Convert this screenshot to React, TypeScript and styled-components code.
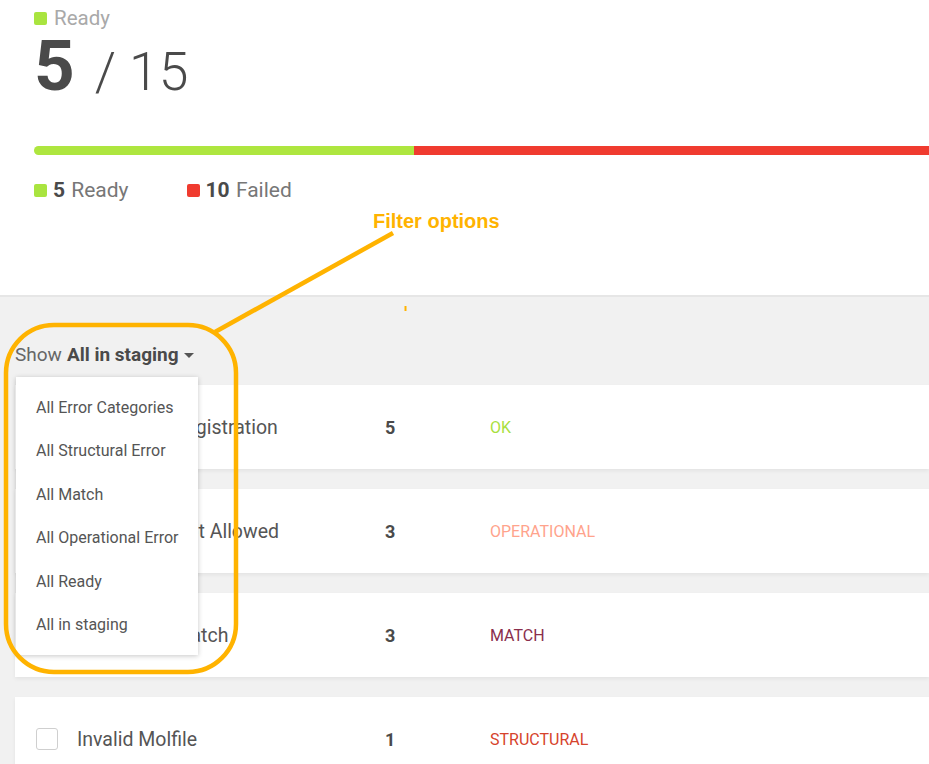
import React from "react";
import styled, { createGlobalStyle } from "styled-components";

const GlobalStyle = createGlobalStyle`
  html, body {
    margin: 0;
    padding: 0;
    background: #ffffff;
    overflow: hidden;
  }
  body {
    font-family: Roboto, "Noto Sans", Arial, sans-serif;
  }
`;

const ORANGE = "#ffb300";

const Page = styled.div`
  position: relative;
  width: 929px;
  height: 764px;
  overflow: hidden;
  display: flex;
  flex-direction: column;
  font-family: Roboto, "Noto Sans", Arial, sans-serif;
  color: #555;
`;

const Header = styled.header`
  padding: 6px 0 0 34px;
`;

const StatusLabel = styled.div`
  display: flex;
  align-items: center;
  gap: 7px;
  font-size: 20.5px;
  line-height: 24px;
  color: #a9a9a9;
`;

const Swatch = styled.span<{ $color: string }>`
  display: inline-block;
  width: 13px;
  height: 13px;
  border-radius: 2px;
  background: ${(p) => p.$color};
  flex: none;
`;

const Count = styled.div`
  margin-top: 1px;
  line-height: 70px;
  height: 70px;
  white-space: nowrap;
`;

const CountMain = styled.span`
  font-size: 71px;
  font-weight: 700;
  color: #4a4a4a;
`;

const CountTotal = styled.span`
  font-size: 53.5px;
  font-weight: 300;
  color: #4a4a4a;
  margin-left: 7px;
`;

const Progress = styled.div`
  margin-top: 45px;
  width: 1140px;
  height: 9px;
  border-radius: 5px;
  overflow: hidden;
  display: flex;
`;

const Segment = styled.div<{ $color: string; $grow: number }>`
  flex: ${(p) => p.$grow};
  background: ${(p) => p.$color};
`;

const Legend = styled.div`
  margin-top: 23px;
  display: flex;
  gap: 58px;
  font-size: 21px;
  line-height: 24px;
  color: #777;
`;

const LegendItem = styled.div`
  display: flex;
  align-items: center;
  gap: 6px;
`;

const LegendValue = styled.b`
  font-weight: 700;
  color: #4a4a4a;
  margin-right: 1px;
`;

const Staging = styled.section`
  flex: 1;
  margin-top: 93px;
  border-top: 2px solid #e6e6e6;
  background: #f1f1f1;
  padding: 47px 0 0 15px;
`;

const FilterBar = styled.div`
  position: relative;
  display: flex;
  align-items: center;
  height: 22px;
  font-size: 19px;
  line-height: 22px;
  color: #666;
  z-index: 2;
`;

const FilterValue = styled.b`
  font-weight: 700;
  color: #4a4a4a;
  margin-left: 5px;
`;

const Caret = styled.span`
  width: 0;
  height: 0;
  margin-left: 5px;
  margin-top: 1px;
  border-left: 5px solid transparent;
  border-right: 5px solid transparent;
  border-top: 5px solid #555;
`;

const Menu = styled.ul`
  position: absolute;
  top: 33px;
  left: 1px;
  width: 182px;
  margin: 0;
  padding: 8.5px 0 8px;
  list-style: none;
  background: #ffffff;
  box-shadow: 0 1px 5px rgba(0, 0, 0, 0.22);
`;

const MenuItem = styled.li`
  height: 43.6px;
  line-height: 43.6px;
  padding-left: 20px;
  font-size: 16px;
  color: #555;
  white-space: nowrap;
`;

const RowList = styled.div`
  margin-top: 19px;
  display: flex;
  flex-direction: column;
  gap: 20px;
`;

const Row = styled.div`
  display: grid;
  grid-template-columns: 22px 327px 105px 1fr;
  align-items: center;
  height: 84px;
  padding-left: 21px;
  background: #ffffff;
  box-shadow: 0 2px 4px rgba(0, 0, 0, 0.06);
`;

const Checkbox = styled.span`
  width: 20px;
  height: 20px;
  border: 1px solid #cfcfcf;
  border-radius: 3px;
  background: #fff;
`;

const Title = styled.span`
  padding-left: 19px;
  font-size: 19.5px;
  color: #555;
  white-space: nowrap;
`;

const Number = styled.span`
  font-size: 18px;
  font-weight: 700;
  color: #4a4a4a;
`;

const Category = styled.span<{ $color: string }>`
  font-size: 16px;
  text-transform: uppercase;
  color: ${(p) => p.$color};
`;

const Annotation = styled.svg`
  position: absolute;
  left: 0;
  top: 0;
  width: 929px;
  height: 764px;
  pointer-events: none;
  z-index: 5;
`;

const Callout = styled.div`
  position: absolute;
  left: 373px;
  top: 209px;
  font-family: "Liberation Sans", Arial, sans-serif;
  font-weight: 700;
  font-size: 20px;
  line-height: 24px;
  color: ${ORANGE};
  z-index: 6;
`;

const filters = [
  "All Error Categories",
  "All Structural Error",
  "All Match",
  "All Operational Error",
  "All Ready",
  "All in staging",
];

const rows = [
  { title: "Eligible for Registration", count: 5, category: "OK", color: "#a8e03e" },
  { title: "Duplicates Not Allowed", count: 3, category: "Operational", color: "#ffa38c" },
  { title: "Substance Match", count: 3, category: "Match", color: "#8a2e4c" },
  { title: "Invalid Molfile", count: 1, category: "Structural", color: "#d6432c" },
];

export default function App() {
  return (
    <>
      <GlobalStyle />
      <Page>
        <Header>
          <StatusLabel>
            <Swatch $color="#a9e43f" />
            Ready
          </StatusLabel>
          <Count>
            <CountMain>5</CountMain>
            <CountTotal>&nbsp;/ 15</CountTotal>
          </Count>
          <Progress>
            <Segment $color="#aee63f" $grow={5} />
            <Segment $color="#f03b2f" $grow={10} />
          </Progress>
          <Legend>
            <LegendItem>
              <Swatch $color="#a9e43f" />
              <span>
                <LegendValue>5</LegendValue> Ready
              </span>
            </LegendItem>
            <LegendItem>
              <Swatch $color="#f03b2f" />
              <span>
                <LegendValue>10</LegendValue> Failed
              </span>
            </LegendItem>
          </Legend>
        </Header>

        <Staging>
          <FilterBar>
            Show<FilterValue>All in staging</FilterValue>
            <Caret />
            <Menu>
              {filters.map((f) => (
                <MenuItem key={f}>{f}</MenuItem>
              ))}
            </Menu>
          </FilterBar>
          <RowList>
            {rows.map((r) => (
              <Row key={r.title}>
                <Checkbox />
                <Title>{r.title}</Title>
                <Number>{r.count}</Number>
                <Category $color={r.color}>{r.category}</Category>
              </Row>
            ))}
          </RowList>
        </Staging>

        <Callout>Filter options</Callout>
        <Annotation viewBox="0 0 929 764">
          <rect x="6" y="325" width="230" height="347" rx="48" ry="48" fill="none" stroke={ORANGE} strokeWidth="4.5" />
          <line x1="393" y1="233" x2="215" y2="332" stroke={ORANGE} strokeWidth="4.5" />
          <line x1="405.5" y1="306" x2="405.5" y2="311" stroke={ORANGE} strokeWidth="2" />
        </Annotation>
      </Page>
    </>
  );
}
